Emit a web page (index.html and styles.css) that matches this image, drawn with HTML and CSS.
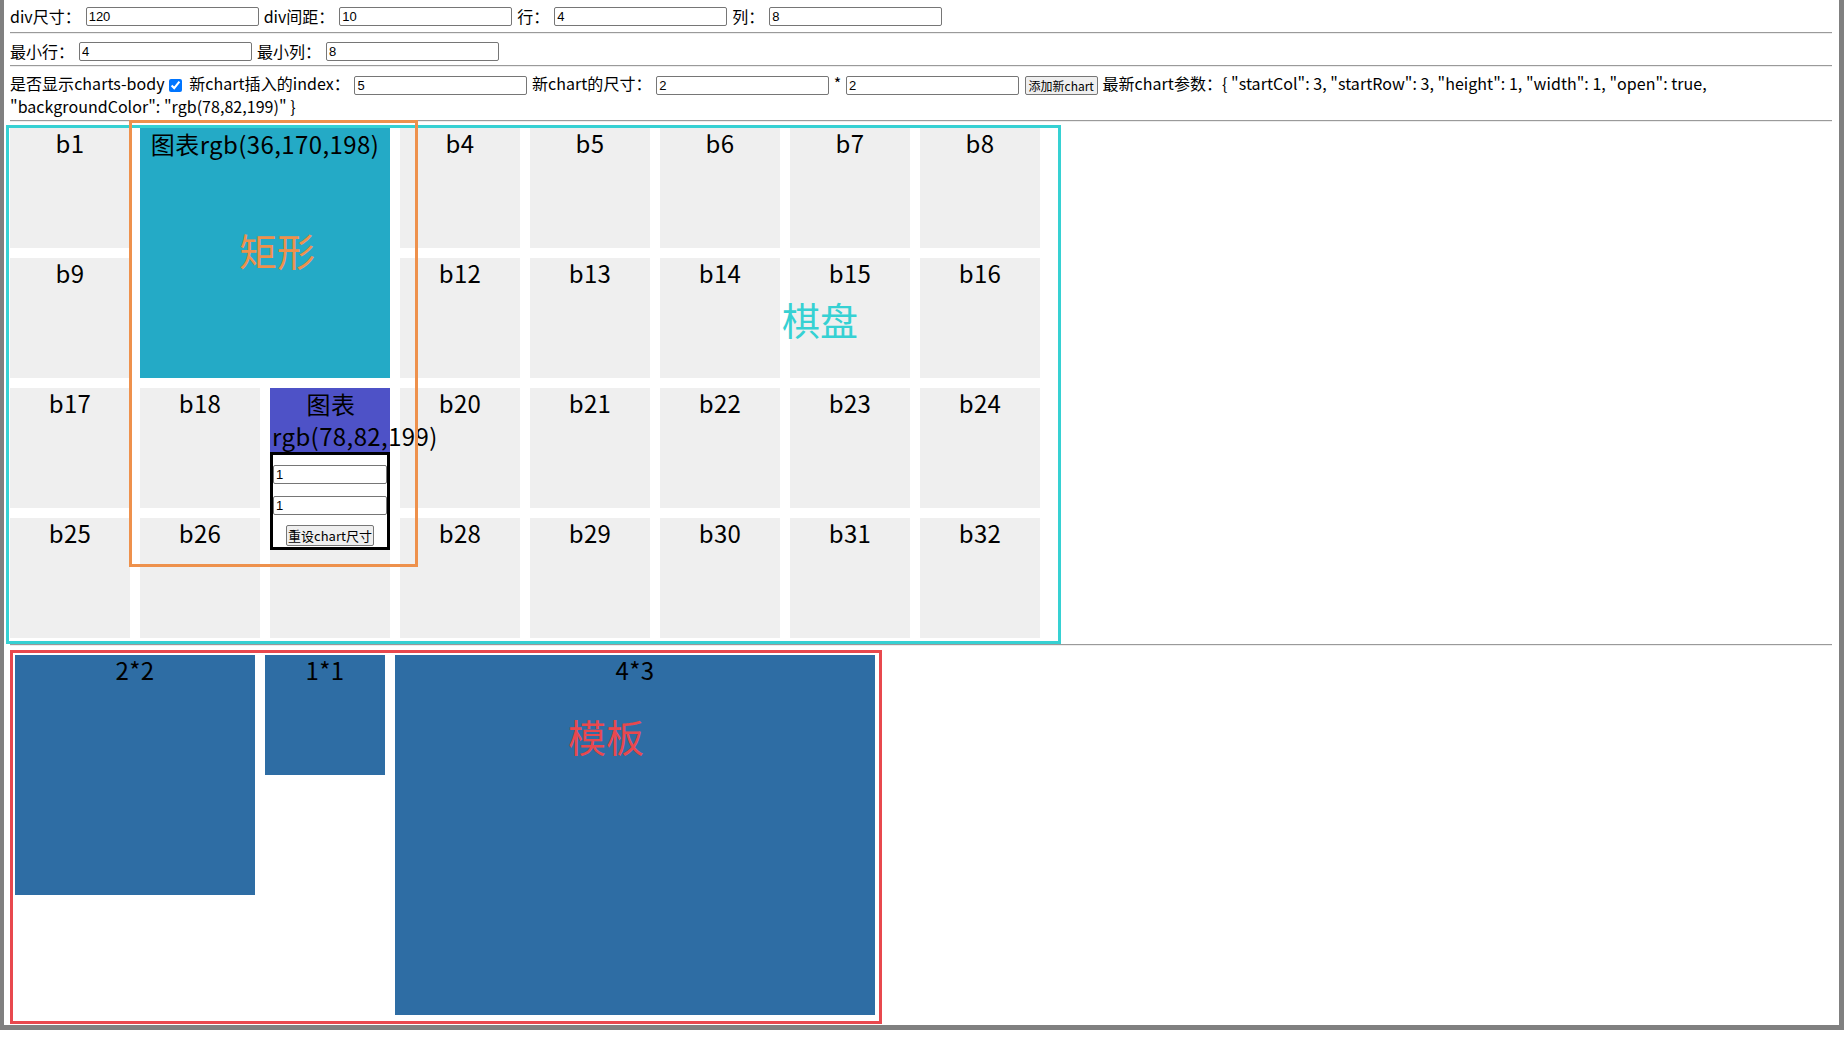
FILE: index.html
```html
<!DOCTYPE html>
<html lang="zh">
<head>
<meta charset="utf-8">
<title>chart board</title>
<link rel="stylesheet" href="styles.css">
</head>
<body>
<div class="frame">
  <div class="row row1">
    <span class="lbl">div尺寸：</span><input class="inp" value="120">
    <span class="lbl">div间距：</span><input class="inp" value="10">
    <span class="lbl">行：</span><input class="inp" value="4">
    <span class="lbl">列：</span><input class="inp" value="8">
  </div>
  <hr class="sep">
  <div class="row row2">
    <span class="lbl">最小行：</span><input class="inp" value="4">
    <span class="lbl">最小列：</span><input class="inp" value="8">
  </div>
  <hr class="sep">
  <div class="row3">
    <div class="line">是否显示charts-body<input type="checkbox" class="chk" checked> 新chart插入的index： <input class="inp" value="5"> 新chart的尺寸： <input class="inp" value="2"> * <input class="inp" value="2"> <button class="btn">添加新chart</button> 最新chart参数：{ "startCol": 3, "startRow": 3, "height": 1, "width": 1, "open": true,</div>
    <div class="line">"backgroundColor": "rgb(78,82,199)" }</div>
  </div>
  <hr class="sep">

  <div class="board">
    <div class="cells">
      <div class="cell">b1</div><div class="cell">b2</div><div class="cell">b3</div><div class="cell">b4</div>
      <div class="cell">b5</div><div class="cell">b6</div><div class="cell">b7</div><div class="cell">b8</div>
      <div class="cell">b9</div><div class="cell">b10</div><div class="cell">b11</div><div class="cell">b12</div>
      <div class="cell">b13</div><div class="cell">b14</div><div class="cell">b15</div><div class="cell">b16</div>
      <div class="cell">b17</div><div class="cell">b18</div><div class="cell">b19</div><div class="cell">b20</div>
      <div class="cell">b21</div><div class="cell">b22</div><div class="cell">b23</div><div class="cell">b24</div>
      <div class="cell">b25</div><div class="cell">b26</div><div class="cell">b27</div><div class="cell">b28</div>
      <div class="cell">b29</div><div class="cell">b30</div><div class="cell">b31</div><div class="cell">b32</div>
    </div>
    <div class="charts">
      <div class="chart chart-a">图表rgb(36,170,198)</div>
      <div class="chart chart-b">
        <div class="chart-title">图表rgb(78,82,199)</div>
        <div class="resize">
          <input class="rinp" value="1">
          <input class="rinp rinp2" value="1">
          <button class="rbtn">重设chart尺寸</button>
        </div>
      </div>
    </div>
  </div>
  <hr class="sep">

  <div class="templates">
    <div class="tpl tpl22">2*2</div>
    <div class="tpl tpl11">1*1</div>
    <div class="tpl tpl43">4*3</div>
  </div>

  <div class="mark-rect"></div>
  <div class="note note-rect">矩形</div>
  <div class="note note-board">棋盘</div>
  <div class="note note-tpl">模板</div>
</div>
</body>
</html>
```

FILE: styles.css
```css
html, body {
  margin: 0;
  padding: 0;
  background: #ffffff;
}

body {
  font-family: "Noto Sans CJK SC", "Noto Sans", sans-serif;
  font-size: 16px;
  color: #000;
}

.frame {
  position: relative;
  width: 1844px;
  height: 1030px;
  box-sizing: border-box;
  border-left: 4px solid #808080;
  border-right: 5px solid #808080;
  border-bottom: 5px solid #808080;
  padding: 0 7px 0 6px;
  overflow: hidden;
  background: #fff;
}

.row {
  display: flex;
  align-items: center;
  column-gap: 5px;
  white-space: nowrap;
}

.row1 {
  height: 32px;
  padding-top: 1px;
  box-sizing: border-box;
}

.row2 {
  height: 31px;
  padding-top: 3px;
  box-sizing: border-box;
}

.lbl {
  line-height: 21px;
}

.inp {
  width: 173px;
  height: 19px;
  box-sizing: border-box;
  border: 1px solid #767676;
  border-radius: 2px;
  padding: 0 2px;
  margin: 0;
  font: 13px "Liberation Sans", Arial, sans-serif;
  color: #000;
  background: #fff;
  vertical-align: middle;
}

.sep {
  margin: 0;
  height: 0;
  border: 0;
  border-top: 1px solid #9a9a9a;
  border-bottom: 1px solid #ededed;
}

.row3 {
  padding: 5px 0 2px;
}

.row3 .line {
  height: 23px;
  line-height: 23px;
  white-space: nowrap;
  letter-spacing: 0.04px;
}

.row3 .inp {
  margin: 0 1px;
}

.chk {
  width: 13px;
  height: 13px;
  margin: 0 4px 0 4px;
  vertical-align: middle;
  accent-color: #0075ff;
}

.btn {
  height: 19px;
  box-sizing: border-box;
  padding: 0 3px;
  margin: 0 1px;
  border: 1px solid #767676;
  border-radius: 2px;
  background: #efefef;
  font: 12px "Noto Sans CJK SC", sans-serif;
  line-height: 16px;
  letter-spacing: 0;
  vertical-align: middle;
  color: #000;
}

/* chess board */
.board {
  position: relative;
  width: 1048px;
  margin: 3px 0 0 -4px;
  padding: 0 0 3px 1px;
  border: 3px solid #36d1d3;
}

.cells,
.charts {
  display: grid;
  grid-template-columns: repeat(8, 120px);
  grid-template-rows: repeat(4, 120px);
  gap: 10px;
}

.charts {
  position: absolute;
  left: 1px;
  top: 0;
}

.cell {
  background: #efefef;
  font-size: 24px;
  line-height: 30px;
  letter-spacing: 0.4px;
  text-align: center;
}

.chart {
  font-size: 24px;
  line-height: 32px;
  letter-spacing: 0.4px;
  text-align: center;
}

.chart-a {
  grid-column: 2 / span 2;
  grid-row: 1 / span 2;
  background: rgb(36, 170, 198);
}

.chart-b {
  grid-column: 3;
  grid-row: 3;
  height: 120px;
  background: rgb(78, 82, 199);
}

.chart-title {
  height: 64px;
  padding-left: 2px;
}

.resize {
  border: 3px solid #000;
  background: #fff;
  padding: 10px 0 1px;
  line-height: normal;
  letter-spacing: 0;
}

.rinp {
  display: block;
  width: 100%;
  height: 19px;
  box-sizing: border-box;
  border: 1px solid #767676;
  border-radius: 2px;
  padding: 0 2px;
  margin: 0;
  font: 13px "Liberation Sans", Arial, sans-serif;
}

.rinp2 {
  margin-top: 12px;
}

.rbtn {
  display: block;
  margin: 10px auto 0;
  height: 21px;
  box-sizing: border-box;
  padding: 0 1px;
  border: 1px solid #767676;
  border-radius: 2px;
  background: #efefef;
  font: 13px "Noto Sans CJK SC", sans-serif;
  line-height: 17px;
  color: #000;
}

/* templates */
.templates {
  display: flex;
  align-items: flex-start;
  gap: 10px;
  width: fit-content;
  margin-top: 4px;
  padding: 2px 4px 6px 2px;
  border: 3px solid #e8484e;
}

.tpl {
  background: #2e6da4;
  font-size: 24px;
  line-height: 30px;
  letter-spacing: 0.4px;
  text-align: center;
}

.tpl22 { width: 240px; height: 240px; }
.tpl11 { width: 120px; height: 120px; }
.tpl43 { width: 480px; height: 360px; }

/* annotation overlays */
.mark-rect {
  position: absolute;
  left: 125px;
  top: 120px;
  width: 289px;
  height: 447px;
  box-sizing: border-box;
  border: 3px solid #ee914c;
}

.note {
  position: absolute;
  font-size: 38px;
  line-height: 38px;
  white-space: nowrap;
}

.note-rect { left: 235px; top: 231px; color: #ee914c; }
.note-board { left: 778px; top: 300px; color: #36d1d3; }
.note-tpl { left: 564px; top: 717px; color: #e8484e; }
```
